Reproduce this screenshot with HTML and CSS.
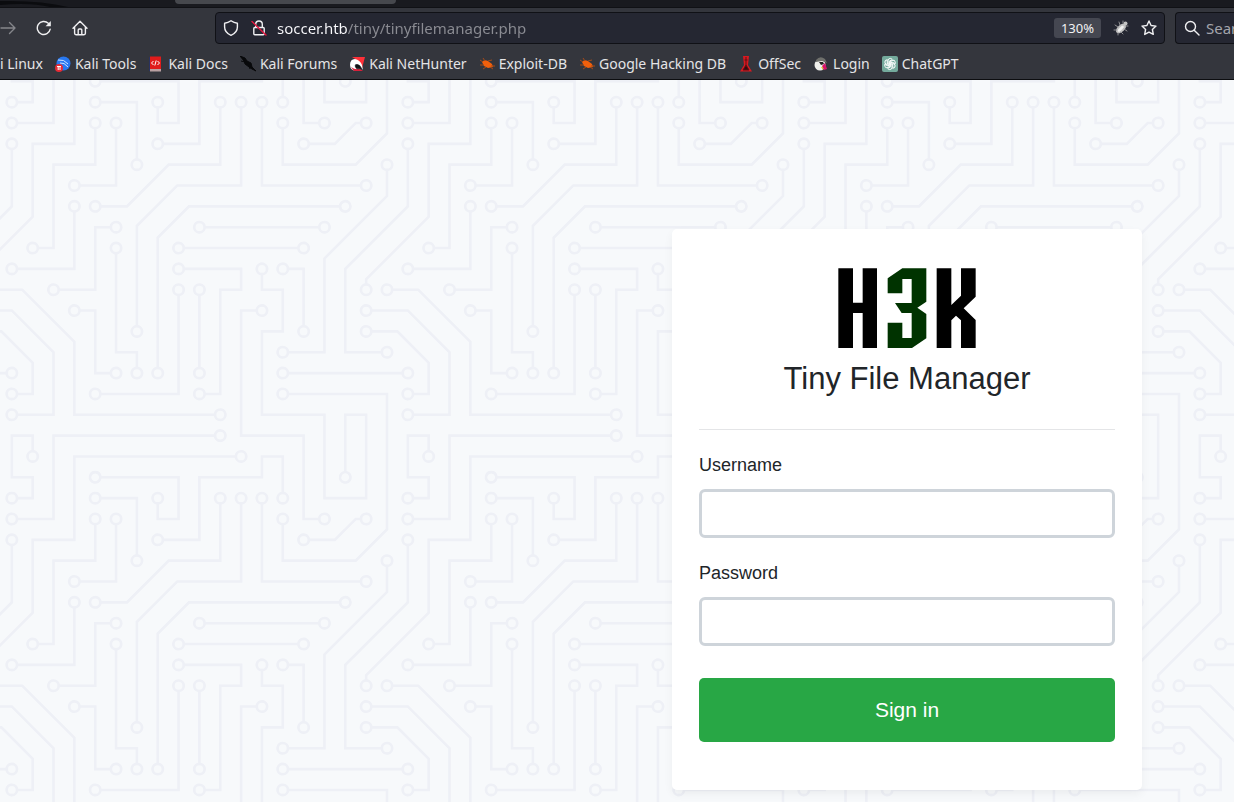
FILE: index.html
```html
<!DOCTYPE html>
<html lang="en">
<head>
<meta charset="utf-8">
<title>Tiny File Manager</title>
<link rel="stylesheet" href="styles.css">
</head>
<body>
<header class="chrome">
  <div class="tabstrip">
    <svg class="swoosh" viewBox="0 0 70 7" aria-hidden="true"><path d="M0 1Q40 0 68 7H50Q30 2 0 5z" fill="#0b0c0f"/></svg>
    <div class="tab"></div>
  </div>
  <nav class="navbar" aria-label="Navigation">
    <div class="nav-buttons">
      <button class="icon-button dim" aria-label="Forward"><svg viewBox="0 0 16 16"><path d="M1 8h14M9.500 2.500 15 8l-5.500 5.500"/></svg></button>
      <button class="icon-button" aria-label="Reload"><svg viewBox="0 0 16 16"><path d="M14.200 9.200A6.500 6.500 0 1 1 12.300 3.300"/><path d="M14.800 1v5.200H9.600z" class="solid"/></svg></button>
      <button class="icon-button" aria-label="Home"><svg viewBox="0 0 16 16"><path d="M1 8.200 8 1.300l7 6.900M2.600 7v6.300q0 1.400 1.400 1.400h8q1.400 0 1.400-1.400V7M6.200 14.500V10q0-1 1-1h1.600q1 0 1 1v4.500"/></svg></button>
    </div>
    <div class="urlbar">
      <svg class="icon" viewBox="0 0 16 16" aria-hidden="true"><path d="M8 .8Q11 3 14.400 3.200V7q0 5.600-6.400 8.300Q1.600 12.600 1.600 7V3.200Q5 3 8 .8z"/></svg>
      <svg class="icon lock" viewBox="0 0 16 16" aria-hidden="true"><path d="M4.700 7.500V4.300a3.300 3.300 0 0 1 6.600 0v3.200M3.800 7.500h8.400q1 0 1 1v5.200q0 1-1 1H3.800q-1 0-1-1V8.500q0-1 1-1z"/><path d="M1 1.500l14 13.500" class="slash"/></svg>
      <input class="address" type="text" aria-label="Address" value="soccer.htb/tiny/tinyfilemanager.php">
      <button class="zoom">130%</button>
      <svg class="icon" viewBox="0 0 16 16" aria-hidden="true"><g fill="#c2c2c2" stroke="none"><ellipse cx="8" cy="8.500" rx="6" ry="3.500" transform="rotate(-42 8 8.500)"/><circle cx="12.500" cy="3.500" r="2"/></g><path d="M5 7 2 5M7 5 6 2M10 3 10 1M4 10H1M5 13v2M8 12l2 2M11 9l3 2M13 6h2" stroke="#8f8f92" stroke-width="1"/><path d="M6 10.500l3.500-3.500" stroke="#f0f0f0" stroke-width="2.500"/></svg>
      <svg class="icon star" viewBox="0 0 16 16" aria-hidden="true"><path d="M8 1l2.100 4.500 4.900.6-3.600 3.400.9 4.900L8 12.100l-4.300 2.300.9-4.900L1 6.100l4.900-.6z"/></svg>
    </div>
    <div class="searchbar">
      <svg class="icon" viewBox="0 0 16 16" aria-hidden="true"><circle cx="6.500" cy="6.500" r="5"/><path d="M10.200 10.200l4.800 4.800"/></svg>
      <input class="search" type="text" placeholder="Search" aria-label="Search">
    </div>
  </nav>
  <nav class="bookmarks" aria-label="Bookmarks">
    <a href="#">i Linux</a>
    <a href="#"><svg viewBox="0 0 16 16"><circle cx="8.500" cy="7.500" r="7" fill="#2878f0"/><path d="M3 4q6-1 10 4M5 7q4-1 8 4" fill="none" stroke="#cfe4ff"/><circle cx="4" cy="12" r="4" fill="#e52b35"/><path d="M2 10.500h4M3.200 10.500v3.500M5 10.500v3.500" stroke="#fff"/></svg>Kali Tools</a>
    <a href="#"><svg viewBox="0 0 16 16"><path d="M1 1h2v14H1z" fill="#293260"/><path d="M2 .500h11v12.500H2z" fill="#e01b1b"/><path d="M2 13h11v2.500H2z" fill="#b9a0a2"/><path d="M5.500 5 3.500 7l2 2M9.500 5l2 2-2 2M8.200 4.500 6.800 9.500" fill="none" stroke="#fff"/></svg>Kali Docs</a>
    <a href="#"><svg viewBox="0 0 16 16"><path d="M0 0 5 2 7 5l4 2 1 4 4 4-4-2-3-2-4-3-1-3z" fill="#08090b" stroke="#08090b"/><path d="M1 5l4 1M9 10l1 3" stroke="#08090b"/></svg>Kali Forums</a>
    <a href="#"><svg viewBox="0 0 16 16"><path d="M3 1h13l-3 11Q9 4 3 1z" fill="#ff3038"/><path d="M1 9Q1 3 6 3q5 1 7 6l1 5q-3-6-6-6-3 0-2 3l3 4Q1 15 1 9z" fill="#fff"/><path d="M2 11q4 3 9 2l3 2H5z" fill="#d9203a"/><path d="M7 9q4-1 5 4-3-2-5-1z" fill="#111"/></svg>Kali NetHunter</a>
    <a href="#"><svg viewBox="0 0 16 16"><path d="M3 6q2-3 6-1l4 3 1 3-5 1-4-2z" fill="#f2600c"/><path d="M4 6 1 4M6 5 4 2M9 5l4-1M5 9H1M7 11l-3 2M12 10h4M11 11l3 2" stroke="#a84a16"/></svg>Exploit-DB</a>
    <a href="#"><svg viewBox="0 0 16 16"><path d="M3 6q2-3 6-1l4 3 1 3-5 1-4-2z" fill="#f2600c"/><path d="M4 6 1 4M6 5 4 2M9 5l4-1M5 9H1M7 11l-3 2M12 10h4M11 11l3 2" stroke="#a84a16"/></svg>Google Hacking DB</a>
    <a href="#"><svg viewBox="0 0 16 16"><path d="M5 0h6l-1 9 4 6.500H2L6 9z" fill="#d81920"/><path d="M8 1v8M6.500 4h3M5 14l3-5 3 5z" fill="#350b0e" stroke="#611015"/></svg>OffSec</a>
    <a href="#"><svg viewBox="0 0 16 16"><circle cx="7" cy="9" r="5.500" fill="#f0f0ec"/><path d="M3 4q4-5 9-1l2 4-5-2-6 1z" fill="#6f706c"/><path d="M6 6h4l1 2-3 1z" fill="#202020"/><path d="M9 10l3-3 2 6-3 1z" fill="#d8146a"/><path d="M8 11l2 0 0 3z" fill="#d8c42b"/></svg>Login</a>
    <a href="#"><svg viewBox="0 0 16 16"><rect width="16" height="16" rx="2" fill="#74aa9c"/><g fill="none" stroke="#fff" stroke-width=".9"><path id="petal" d="M6 8V4.800Q6 2.400 8.200 2.400 9.600 2.400 10.300 3.400L7.200 5.300V8.700"/><use href="#petal" transform="rotate(60 8 8)"/><use href="#petal" transform="rotate(120 8 8)"/><use href="#petal" transform="rotate(180 8 8)"/><use href="#petal" transform="rotate(240 8 8)"/><use href="#petal" transform="rotate(300 8 8)"/></g></svg>ChatGPT</a>
  </nav>
</header>
<main class="login-page">
  <form class="card">
    <svg class="logo" viewBox="54 39 414 240" role="img" aria-label="H3K">
      <path d="M55 40H99V143H128V40H171V279H128V174H99V279H55z"/>
      <path fill="#003300" d="M203 70L247 40H319V140L292 158L319 177V250L276 279H203V203H247V249H275V174H245L225 144H275V72H247V115H203z"/>
      <path d="M350 40H394V150L423 122V40H467V125L431 160L467 195V279H423V196L408 182L394 196V279H350z"/>
    </svg>
    <h1 class="title">Tiny File Manager</h1>
    <hr class="rule">
    <div class="field">
      <label for="user">Username</label>
      <input id="user" type="text">
    </div>
    <div class="field">
      <label for="pass">Password</label>
      <input id="pass" type="password">
    </div>
    <button class="submit" type="button">Sign in</button>
  </form>
</main>
</body>
</html>
```
FILE: styles.css
```css
* { box-sizing: border-box; }

body {
  margin: 0;
  min-height: 100vh;
  display: flex;
  flex-direction: column;
  font-family: "Liberation Sans", Arial, sans-serif;
}

/* Browser chrome */
.chrome {
  background: #34363d;
  border-bottom: 1px solid #0c0d10;
  color: #e4e4e6;
  font-family: "Noto Sans", sans-serif;
  font-size: 15px;
}
.tabstrip {
  display: flex;
  height: 8px;
  background: #191a1f;
  border-bottom: 1px solid #101115;
}
.swoosh { width: 70px; height: 7px; margin-right: 105px; }
.tab {
  width: 221px;
  height: 4px;
  background: #46484d;
  border-radius: 0 0 4px 4px;
}
.navbar {
  display: flex;
  align-items: center;
  gap: 10px;
  height: 40px;
}
.nav-buttons {
  display: flex;
  flex: none;
  gap: 20px;
  width: 205px;
}
.icon-button {
  flex: none;
  width: 16px;
  height: 16px;
  padding: 0;
  border: 0;
  background: none;
  color: #f0f0f2;
}
.icon-button.dim { color: #85868b; }
.icon-button svg, .icon {
  display: block;
  flex: none;
  width: 16px;
  height: 16px;
  fill: none;
  stroke: currentColor;
  stroke-width: 1.4;
  stroke-linecap: round;
  stroke-linejoin: round;
}
.icon-button .solid { fill: currentColor; stroke: none; }
.lock .slash { stroke: #e5163f; }
.urlbar, .searchbar {
  display: flex;
  align-items: center;
  height: 32px;
  border: 1px solid #101116;
  border-radius: 4px;
  background: #252732;
  color: #f0f0f2;
}
.urlbar {
  flex: 1;
  gap: 12px;
  min-width: 0;
  padding: 0 7px;
}
.searchbar {
  flex: none;
  gap: 6px;
  width: 59px;
  padding-left: 8px;
  border-right: 0;
  border-radius: 4px 0 0 4px;
}
.address, .search {
  flex: 1;
  min-width: 0;
  padding: 0;
  border: 0;
  outline: 0;
  background: none;
  font: inherit;
}
.address {
  margin-left: -2px;
  background: linear-gradient(to right, #fbfbfe 71px, #8b8c93 71px);
  -webkit-background-clip: text;
  background-clip: text;
  color: transparent;
}
.search::placeholder { color: #a3a4ab; opacity: 1; }
.zoom {
  height: 20px;
  padding: 0 7px;
  border: 0;
  border-radius: 3px;
  background: #454751;
  color: #f2f2f4;
  font: 13px/20px "Noto Sans", sans-serif;
}
.bookmarks {
  display: flex;
  align-items: center;
  gap: 12px;
  height: 31px;
  font-size: 14px;
  white-space: nowrap;
}
.bookmarks a {
  display: flex;
  align-items: center;
  gap: 4px;
  color: inherit;
  text-decoration: none;
}
.bookmarks svg { width: 16px; height: 16px; }

/* Login page */
.login-page {
  flex: 1;
  display: flex;
  justify-content: flex-end;
  align-items: flex-start;
  padding: 149px 92px 12px;
  background-color: #f7f9fb;
  background-position: -52px 0;
  background-size: 396px 396px;
  background-image: url("data:image/svg+xml,%3Csvg xmlns='http://www.w3.org/2000/svg' viewBox='0 0 304 304' width='304' height='304'%3E%3Cpath fill='%23eef0f6' d='M44.1 224a5 5 0 1 1 0 2H0v-2h44.1zm160 48a5 5 0 1 1 0 2H82v-2h122.1zm57.8-46a5 5 0 1 1 0-2H304v2h-42.1zm0 16a5 5 0 1 1 0-2H304v2h-42.1zm6.2-114a5 5 0 1 1 0 2h-86.2a5 5 0 1 1 0-2h86.2zm-256-48a5 5 0 1 1 0 2H0v-2h12.1zm185.8 34a5 5 0 1 1 0-2h86.2a5 5 0 1 1 0 2h-86.2zM258 12.1a5 5 0 1 1-2 0V0h2v12.1zm-64 208a5 5 0 1 1-2 0v-54.2a5 5 0 1 1 2 0v54.2zm48-198.2V80h62v2h-64V21.9a5 5 0 1 1 2 0zm16 16V64h46v2h-48V37.9a5 5 0 1 1 2 0zm-128 96V208h16v12.1a5 5 0 1 1-2 0V210h-16v-76.1a5 5 0 1 1 2 0zm-5.9-21.9a5 5 0 1 1 0 2H114v48H85.9a5 5 0 1 1 0-2H112v-48h12.1zm-6.2 130a5 5 0 1 1 0-2H176v-74.1a5 5 0 1 1 2 0V242h-60.1zm-16-64a5 5 0 1 1 0-2H114v48h10.1a5 5 0 1 1 0 2H112v-48h-10.1zM66 284.1a5 5 0 1 1-2 0V274H50v30h-2v-32h18v12.1zM236.1 176a5 5 0 1 1 0 2H226v94h48v32h-2v-30h-48v-98h12.1zm25.8-30a5 5 0 1 1 0-2H274v44.1a5 5 0 1 1-2 0V146h-10.1zm-64 96a5 5 0 1 1 0-2H208v-80h16v-14h-42.1a5 5 0 1 1 0-2H226v18h-16v80h-12.1zm86.2-210a5 5 0 1 1 0 2H272V0h2v32h10.1zM98 101.9V146H53.9a5 5 0 1 1 0-2H96v-42.1a5 5 0 1 1 2 0zM53.9 34a5 5 0 1 1 0-2H80V0h2v34H53.9zm60.1 3.9V66H82v64H69.9a5 5 0 1 1 0-2H80V64h32V37.9a5 5 0 1 1 2 0zM101.9 82a5 5 0 1 1 0-2H128V37.9a5 5 0 1 1 2 0V82h-28.1zm16-64a5 5 0 1 1 0-2H146v44.1a5 5 0 1 1-2 0V18h-26.1zm102.2 270a5 5 0 1 1 0 2H98v14h-2v-16h124.1zM242 149.9V160h16v34h-16v62h48v48h-2v-46h-48v-66h16v-30h-16v-12.1a5 5 0 1 1 2 0zM53.9 18a5 5 0 1 1 0-2H64V2H48V0h18v18H53.9zm112 32a5 5 0 1 1 0-2H192V0h50v2h-48v48h-28.1zm-48-48a5 5 0 0 1-9.8-2h2.07a3 3 0 1 0 5.66 0H178v34h-18V21.9a5 5 0 1 1 2 0V32h14V2h-58.1zm0 96a5 5 0 1 1 0-2H137l32-32h39V21.9a5 5 0 1 1 2 0V66h-40.17l-32 32H117.9zm28.1 90.1a5 5 0 1 1-2 0v-76.51L175.59 80H224V21.9a5 5 0 1 1 2 0V82h-49.59L146 112.41v75.69zm16 32a5 5 0 1 1-2 0v-99.51L184.59 96H300.1a5 5 0 0 1 3.9-3.9v2.07a3 3 0 0 0 0 5.66v2.07a5 5 0 0 1-3.9-3.9H185.41L162 121.41v98.69zm-144-64a5 5 0 1 1-2 0v-3.51l48-48V48h32V0h2v50H66v55.41l-48 48v2.69zM50 53.9v43.51l-48 48V208h26.1a5 5 0 1 1 0 2H0v-65.41l48-48V53.9a5 5 0 1 1 2 0zm-16 16V89.41l-34 34v-2.82l32-32V69.9a5 5 0 1 1 2 0zM12.1 32a5 5 0 1 1 0 2H9.41L0 43.41V40.6L8.59 32h3.51zm265.8 18a5 5 0 1 1 0-2h18.69l7.41-7.41v2.82L297.41 50H277.9zm-16 160a5 5 0 1 1 0-2H288v-71.41l16-16v2.82l-14 14V210h-28.1zm-208 32a5 5 0 1 1 0-2H64v-22.59L40.59 194H21.9a5 5 0 1 1 0-2H41.41L66 216.59V242H53.9zm150.2 14a5 5 0 1 1 0 2H96v-56.6L56.6 162H37.9a5 5 0 1 1 0-2h19.5L98 200.6V256h106.1zm-150.2 2a5 5 0 1 1 0-2H80v-46.59L48.59 178H21.9a5 5 0 1 1 0-2H49.41L82 208.59V258H53.9zM34 39.8v1.61L9.41 66H0v-2h8.59L32 40.59V0h2v39.8zM2 300.1a5 5 0 0 1 3.9 3.9H3.83A3 3 0 0 0 0 302.17V256h18v48h-2v-46H2v42.1zM34 241v63h-2v-62H0v-2h34v1zM17 18H0v-2h16V0h2v18h-1zm273-2h14v2h-16V0h2v16zm-32 273v15h-2v-14h-14v14h-2v-16h18v1zM0 92.1A5.02 5.02 0 0 1 6 97a5 5 0 0 1-6 4.9v-2.07a3 3 0 1 0 0-5.66V92.1zM80 272h2v32h-2v-32zm37.9 32h-2.07a3 3 0 0 0-5.66 0h-2.07a5 5 0 0 1 9.8 0zM5.9 0A5.02 5.02 0 0 1 0 5.9V3.83A3 3 0 0 0 3.83 0H5.9zm294.2 0h2.07A3 3 0 0 0 304 3.83V5.9a5 5 0 0 1-3.9-5.9zm3.9 300.1v2.07a3 3 0 0 0-1.83 1.83h-2.07a5 5 0 0 1 3.9-3.9z'/%3E%3Cpath stroke='%23f7f9fb' stroke-width='6' stroke-linecap='round' d='M49 225h0M209 273h0M257 225h0M257 241h0M273 129h0M177 129h0M17 81h0M193 113h0M289 113h0M257 17h0M193 225h0M193 161h0M241 17h0M257 33h0M129 129h0M145 225h0M129 113h0M81 161h0M113 241h0M177 161h0M97 177h0M129 225h0M65 289h0M241 177h0M257 145h0M273 193h0M193 241h0M177 145h0M289 33h0M97 97h0M49 145h0M49 33h0M113 33h0M65 129h0M97 81h0M129 33h0M113 17h0M145 65h0M225 289h0M241 145h0M49 17h0M161 49h0M161 17h0M113 97h0M209 17h0M145 193h0M225 17h0M161 225h0M17 161h0M33 209h0M49 49h0M33 65h0M17 33h0M273 49h0M257 209h0M49 241h0M17 193h0M209 257h0M33 161h0M49 257h0M17 177h0'/%3E%3C/svg%3E");
}
.card {
  flex: 0 1 470px;
  display: flex;
  flex-direction: column;
  padding: 39px 27px 48px;
  border-radius: 5px;
  background: #fff;
  box-shadow: 0 4px 10px rgba(0, 0, 0, .05);
  color: #212529;
}
.logo { align-self: center; width: 138px; height: 80px; }
.title {
  margin: 12px 0 31px;
  font-size: 31px;
  font-weight: 400;
  line-height: 38px;
  text-align: center;
}
.rule {
  width: 100%;
  margin: 0;
  border: 0;
  border-top: 1px solid #e4e5e7;
}
.field {
  display: flex;
  flex-direction: column;
  gap: 10px;
  margin-top: 22px;
}
.field label { font-size: 18px; line-height: 27px; }
.field input {
  height: 49px;
  padding: 8px 16px;
  border: 3px solid #ced4da;
  border-radius: 6px;
  background: #fff;
  font: 18px "Liberation Sans", Arial, sans-serif;
}
.submit {
  height: 64px;
  margin-top: 32px;
  border: 0;
  border-radius: 5px;
  background: #28a745;
  color: #fff;
  font: 21px "Liberation Sans", Arial, sans-serif;
}
```
